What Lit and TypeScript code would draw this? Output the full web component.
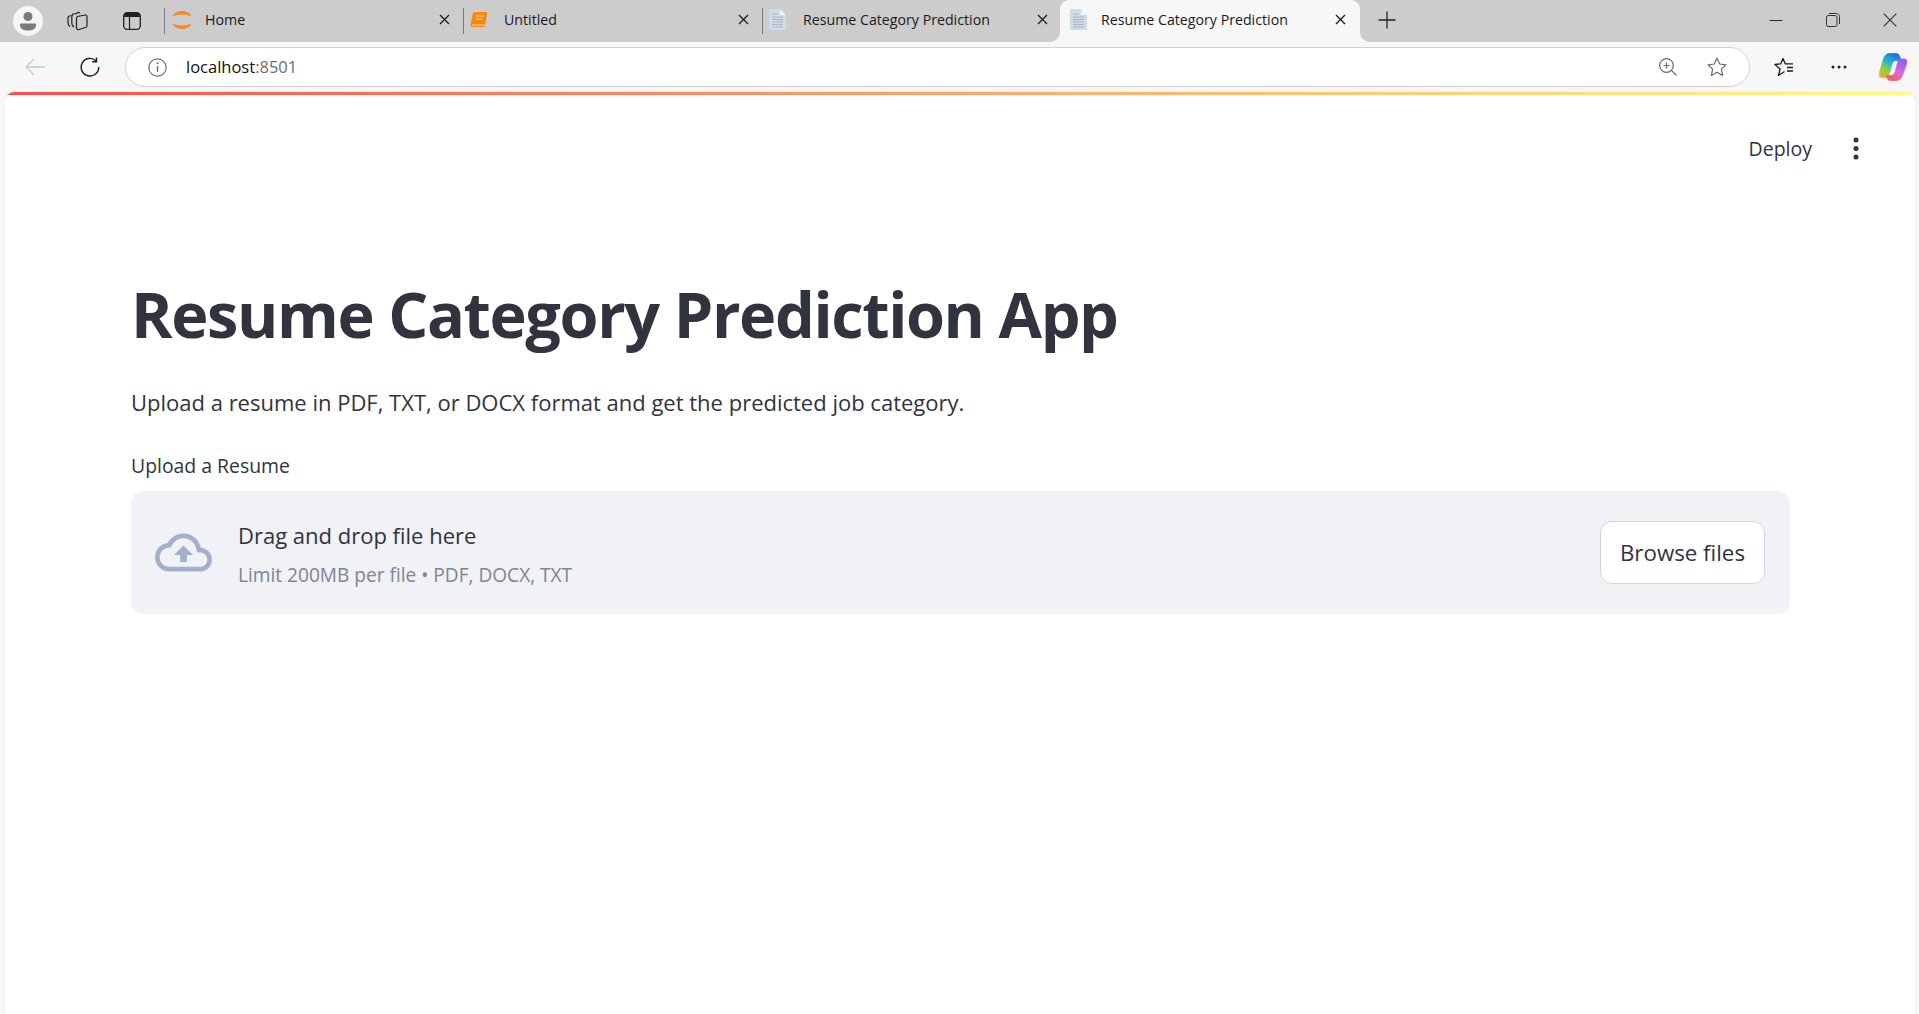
import { LitElement, html, css } from "lit";
import { customElement } from "lit/decorators.js";

const docIcon = html`<svg class="fav" width="17" height="21" viewBox="0 0 17 21">
  <path d="M0 0h11l6 6v15H0z" fill="#cfdbe6" />
  <path d="M11 0l6 6h-6z" fill="#eef3f7" />
  <path d="M3 5h6M3 8h11M3 10.500h11M3 13h11M3 15.500h11M3 18h11" stroke="#a9b8c6" stroke-width="1" />
</svg>`;

const homeIcon = html`<svg class="fav" width="22" height="20" viewBox="0 0 22 20" fill="none">
  <path d="M2 6C4.500 0 17.500 0 20 6C16 3.500 6 3.500 2 6z" fill="#f58a2e" stroke="#f58a2e" stroke-width="1" stroke-linejoin="round" />
  <path d="M2 14C4.500 20 17.500 20 20 14C16 16.500 6 16.500 2 14z" fill="#f58a2e" stroke="#f58a2e" stroke-width="1" stroke-linejoin="round" />
</svg>`;

const bookIcon = html`<svg class="fav" width="18" height="18" viewBox="0 0 18 18">
  <path d="M5 1h11c1 0 1.500.6 1.300 1.600L15 14.500c-.2 1-.8 1.500-1.800 1.500H2.500C1 16 .3 15 .6 13.500L2.800 3C3.100 1.600 3.800 1 5 1z" fill="#f28a12" />
  <path d="M2 14h12.500M6.500 5h7M6 8h6" stroke="#ffd9a6" stroke-width="1" fill="none" />
</svg>`;

const closeIcon = html`<svg class="x" width="11" height="11" viewBox="0 0 11 11">
  <path d="M1 1l9 9M10 1l-9 9" stroke="#1a1a1a" stroke-width="1.300" fill="none" />
</svg>`;

const tabs = [
  { title: "Home", icon: homeIcon },
  { title: "Untitled", icon: bookIcon },
  { title: "Resume Category Prediction", icon: docIcon },
];

@customElement("app-root")
export class AppRoot extends LitElement {
  static styles = css`
    :host {
      display: flex;
      flex-direction: column;
      height: 100vh;
      overflow: hidden;
      background: #f7f7f7;
      font-family: "Open Sans", sans-serif;
      color: #31333f;
    }

    /* browser chrome */
    .strip {
      display: flex;
      height: 42px;
      flex: none;
      background: #f7f7f7;
    }
    .strip-left {
      display: flex;
      align-items: center;
      width: 1060px;
      background: #cccccc;
      border-bottom-right-radius: 10px;
    }
    .tools {
      display: flex;
      align-items: center;
      width: 164px;
      flex: none;
      padding-left: 13px;
      box-sizing: border-box;
    }
    .tools .t2 { margin-left: 24px; }
    .tools .t3 { margin-left: 35px; }
    .tab {
      display: flex;
      align-items: center;
      width: 299px;
      height: 42px;
      flex: none;
      box-sizing: border-box;
      padding: 0 13px 3px 7px;
      font-size: 14.200px;
      color: #1a1a1a;
      position: relative;
    }
    .tab.sep::before {
      content: "";
      position: absolute;
      left: 0;
      top: 8px;
      bottom: 8px;
      width: 1px;
      background: #7c7c7c;
    }
    .fav-box {
      width: 34px;
      flex: none;
      display: flex;
      align-items: center;
    }
    .fav { display: block; }
    .tab .x { margin-left: auto; }
    .active-wrap {
      width: 300px;
      flex: none;
      background: #cccccc;
    }
    .active-wrap .tab {
      width: 300px;
      background: #f7f7f7;
      border-radius: 9px 9px 0 0;
      padding: 0 14px 3px 10px;
    }
    .active-wrap .fav-box { width: 31px; }
    .strip-right {
      flex: 1;
      display: flex;
      align-items: center;
      background: #cccccc;
      border-bottom-left-radius: 10px;
      padding: 0 0 2px 18px;
    }
    .win {
      margin-left: auto;
      display: flex;
      align-items: center;
      gap: 43px;
      padding-right: 22px;
    }

    .toolbar {
      display: flex;
      align-items: center;
      height: 50px;
      flex: none;
      box-sizing: border-box;
      padding: 0 0 0 25px;
    }
    .toolbar .reload { margin-left: 35px; }
    .address {
      display: flex;
      align-items: center;
      width: 1625px;
      height: 40px;
      flex: none;
      box-sizing: border-box;
      margin-left: 25px;
      padding: 0 22px 0 22px;
      background: #ffffff;
      border: 1px solid #d2d2d2;
      border-radius: 20px;
    }
    .url {
      margin: 0 0 2px 19px;
      font-size: 16.500px;
      color: #111111;
    }
    .url span { color: #6d6d6d; }
    .address .zoom { margin-left: auto; }
    .address .star { margin-left: 30px; }
    .toolbar .favs { margin-left: 24px; }
    .toolbar .more { margin-left: 37px; }
    .toolbar .copilot { margin-left: 32px; }

    /* streamlit page */
    .page {
      flex: 1;
      margin: 0 4px 0 5px;
      background: #ffffff;
      border-radius: 9px 9px 0 0;
      overflow: hidden;
      box-shadow: 0 0 1px #bdbdbd;
    }
    .deco {
      height: 3px;
      background: linear-gradient(90deg, #ff4b4b, #fffd80);
    }
    .head {
      display: flex;
      align-items: center;
      justify-content: flex-end;
      height: 106px;
      padding-right: 56px;
      gap: 41px;
    }
    .deploy {
      font-size: 19.500px;
    }
    .main {
      padding: 70px 125px 0 126px;
    }
    h1 {
      margin: 0;
      font-size: 63px;
      font-weight: 700;
      letter-spacing: -1.4px;
      line-height: 86px;
      color: #31333f;
    }
    .lead {
      margin: 28px 0 0;
      font-size: 22px;
      line-height: 34px;
    }
    .label {
      margin: 33px 0 0;
      font-size: 19.400px;
      line-height: 28px;
    }
    .drop {
      display: flex;
      align-items: center;
      height: 123px;
      margin-top: 11px;
      padding: 0 25px 0 24px;
      background: #f0f2f6;
      border-radius: 12px;
    }
    .cloud { display: block; flex: none; }
    .drop-text {
      margin-left: 26px;
      padding-top: 5px;
    }
    .drag {
      font-size: 22px;
      line-height: 32px;
    }
    .limit {
      margin-top: 8px;
      font-size: 19.100px;
      line-height: 32px;
      color: #808495;
    }
    .browse {
      margin-left: auto;
      width: 165px;
      height: 63px;
      box-sizing: border-box;
      background: #ffffff;
      border: 1px solid #d3d4da;
      border-radius: 12px;
      font-family: inherit;
      font-size: 22.300px;
      color: #31333f;
      padding: 0;
    }
  `;

  render() {
    return html`
      <div class="strip">
        <div class="strip-left">
          <div class="tools">
            <svg width="30" height="30" viewBox="0 0 30 30">
              <circle cx="15" cy="15" r="15" fill="#f5f5f5" />
              <circle cx="15" cy="10.500" r="4.500" fill="#7a7a7a" />
              <path d="M8 17.500h14c.6 0 1 .4 1 1v1c0 3-3.500 5-8 5s-8-2-8-5v-1c0-.6.4-1 1-1z" fill="#7a7a7a" />
            </svg>
            <svg class="t2" width="21" height="20" viewBox="0 0 21 20" fill="none" stroke="#1f1f1f" stroke-width="1.200">
              <path d="M3.800 4.500C2 4.800 1 5.800 1 7v5c0 1.500.6 2.500 2 3.500" />
              <path d="M7.500 2.500C5.700 3 4.800 4 4.800 5.500V12c0 2 .8 3 2.400 4" />
              <path d="M8 3.200l3-1.700c.8-.4 1.600 0 1.800.8" />
              <path d="M10.500 5.500l7.500-1.500c1-.2 2 .6 2 1.700v9c0 1-.5 1.600-1.500 1.800l-6.500 2c-1.500.4-2.500-.4-2.500-1.800V7.500c0-1 .5-1.800 1-2z" />
            </svg>
            <svg class="t3" width="18" height="18" viewBox="0 0 18 18" fill="none">
              <rect x=".7" y=".7" width="16.600" height="16.600" rx="3.500" stroke="#1f1f1f" stroke-width="1.300" />
              <path d="M1 5V3.500C1 2 2 1 3.500 1h11C16 1 17 2 17 3.500V5z" fill="#1f1f1f" />
              <path d="M6.500 5v12" stroke="#1f1f1f" stroke-width="1.200" />
            </svg>
          </div>
          ${tabs.map(
            (t) => html`
              <div class="tab sep">
                <div class="fav-box">${t.icon}</div>
                ${t.title}${closeIcon}
              </div>
            `
          )}
        </div>
        <div class="active-wrap">
          <div class="tab">
            <div class="fav-box">${docIcon}</div>
            Resume Category Prediction${closeIcon}
          </div>
        </div>
        <div class="strip-right">
          <svg width="18" height="18" viewBox="0 0 18 18">
            <path d="M9 .5v17M.5 9h17" stroke="#222222" stroke-width="1.300" fill="none" />
          </svg>
          <div class="win">
            <svg width="14" height="14" viewBox="0 0 14 14"><path d="M.5 7.500h13" stroke="#333333" stroke-width="1.100" /></svg>
            <svg width="14" height="14" viewBox="0 0 14 14" fill="none" stroke="#333333" stroke-width="1">
              <rect x=".5" y="2.500" width="10.500" height="11" rx="1.800" />
              <path d="M3 .5h7.500c1.700 0 3 1.300 3 3V11" />
            </svg>
            <svg width="14" height="14" viewBox="0 0 14 14"><path d="M.7.700l12.600 12.600M13.300.700L.7 13.300" stroke="#333333" stroke-width="1.100" /></svg>
          </div>
        </div>
      </div>

      <div class="toolbar">
        <svg width="20" height="18" viewBox="0 0 20 18" fill="none" stroke="#c9c9c9" stroke-width="1.300">
          <path d="M20 9H1M9 1L1 9l8 8" />
        </svg>
        <svg class="reload" width="20" height="20" viewBox="0 0 20 20" fill="none" stroke="#1a1a1a" stroke-width="1.400">
          <path d="M16 3.800A8.800 8.800 0 1 0 18.800 10" />
          <path d="M16.500 .5v4.300h-4.300" />
        </svg>
        <div class="address">
          <svg width="19" height="19" viewBox="0 0 19 19" fill="none">
            <circle cx="9.500" cy="9.500" r="8.700" stroke="#6e6e6e" stroke-width="1.200" />
            <path d="M9.500 8v6" stroke="#6e6e6e" stroke-width="1.400" />
            <circle cx="9.500" cy="5.300" r="1" fill="#6e6e6e" />
          </svg>
          <div class="url">localhost<span>:8501</span></div>
          <svg class="zoom" width="18" height="18" viewBox="0 0 18 18" fill="none" stroke="#6a6a6a" stroke-width="1.200">
            <circle cx="7.500" cy="7.500" r="6.800" />
            <path d="M12.500 12.500L17.500 17.500M7.500 4.500v6M4.500 7.500h6" />
          </svg>
          <svg class="star" width="20" height="20" viewBox="0 0 20 20" fill="none" stroke="#6a6a6a" stroke-width="1.200" stroke-linejoin="round">
            <path d="M10 1.200l2.700 5.800 6.300.8-4.600 4.300 1.200 6.300L10 15.300l-5.600 3.100 1.200-6.300L1 7.800l6.300-.8z" />
          </svg>
        </div>
        <svg class="favs" width="20" height="20" viewBox="0 0 20 20" fill="none" stroke="#1a1a1a" stroke-width="1.300" stroke-linejoin="round">
          <path d="M10.500 14.500L4.500 18.500L6 12L1 7.500L6.800 6.800L9 1.500L11.200 6.800H19" />
          <path d="M13 10.500h6M13 14h6" />
        </svg>
        <svg class="more" width="16" height="4" viewBox="0 0 16 4" fill="#222222">
          <circle cx="2" cy="2" r="1.500" /><circle cx="8" cy="2" r="1.500" /><circle cx="14" cy="2" r="1.500" />
        </svg>
        <svg class="copilot" width="28" height="28" viewBox="0 0 28 28">
          <defs>
            <linearGradient id="cpa" x1=".7" y1="0" x2=".2" y2="1">
              <stop offset="0" stop-color="#1c6fe0" />
              <stop offset=".4" stop-color="#27b8c8" />
              <stop offset=".7" stop-color="#8fd03e" />
              <stop offset="1" stop-color="#f2b01e" />
            </linearGradient>
            <linearGradient id="cpb" x1=".7" y1="0" x2=".3" y2="1">
              <stop offset="0" stop-color="#8f5bf0" />
              <stop offset=".55" stop-color="#d76be0" />
              <stop offset="1" stop-color="#f4605a" />
            </linearGradient>
          </defs>
          <path d="M11 .5h6c2 0 3 1 3.700 3l1.300 4h-5c-2 0-3.200 1-3.800 3l-3.200 11c-.6 2-1.700 3-3.700 3H3c-2.500 0-3.400-2-2.800-4L4.500 5.500C5.500 2.300 7.800.5 11 .5z" fill="url(#cpa)" stroke="url(#cpa)" stroke-width=".8" />
          <path d="M17 27.500h-5.500c-2 0-3-1-3.700-3l-.6-2h4.800c2 0 3.200-1 3.800-3l3.200-11c.6-2 1.700-2.500 3.700-2.500h2.400c2.500 0 3.400 2 2.800 4L23.500 22.500C22.500 25.700 20.200 27.500 17 27.500z" fill="url(#cpb)" stroke="url(#cpb)" stroke-width=".8" />
        </svg>
      </div>

      <div class="page">
        <div class="deco"></div>
        <div class="head">
          <div class="deploy">Deploy</div>
          <svg width="6" height="23" viewBox="0 0 6 23" fill="#31333f">
            <circle cx="3" cy="3" r="2.500" /><circle cx="3" cy="11.500" r="2.500" /><circle cx="3" cy="20" r="2.500" />
          </svg>
        </div>
        <div class="main">
          <h1>Resume Category Prediction App</h1>
          <p class="lead">Upload a resume in PDF, TXT, or DOCX format and get the predicted job category.</p>
          <div class="label">Upload a Resume</div>
          <div class="drop">
            <svg class="cloud" width="57" height="57" viewBox="0 0 24 24" fill="#a3b0cc">
              <path d="M19.350 10.040C18.670 6.590 15.640 4 12 4 9.110 4 6.600 5.640 5.350 8.040 2.340 8.360 0 10.910 0 14c0 3.310 2.690 6 6 6h13c2.760 0 5-2.240 5-5 0-2.640-2.050-4.780-4.650-4.960zM19 18H6c-2.210 0-4-1.790-4-4 0-2.050 1.530-3.760 3.560-3.970l1.070-.11.5-.95C8.080 7.140 9.940 6 12 6c2.620 0 4.880 1.860 5.390 4.430l.3 1.500 1.530.11c1.560.1 2.780 1.410 2.780 2.960 0 1.650-1.350 3-3 3zM8 13h2.550v3h2.900v-3H16l-4-4z" />
            </svg>
            <div class="drop-text">
              <div class="drag">Drag and drop file here</div>
              <div class="limit">Limit 200MB per file • PDF, DOCX, TXT</div>
            </div>
            <button class="browse">Browse files</button>
          </div>
        </div>
      </div>
    `;
  }
}
